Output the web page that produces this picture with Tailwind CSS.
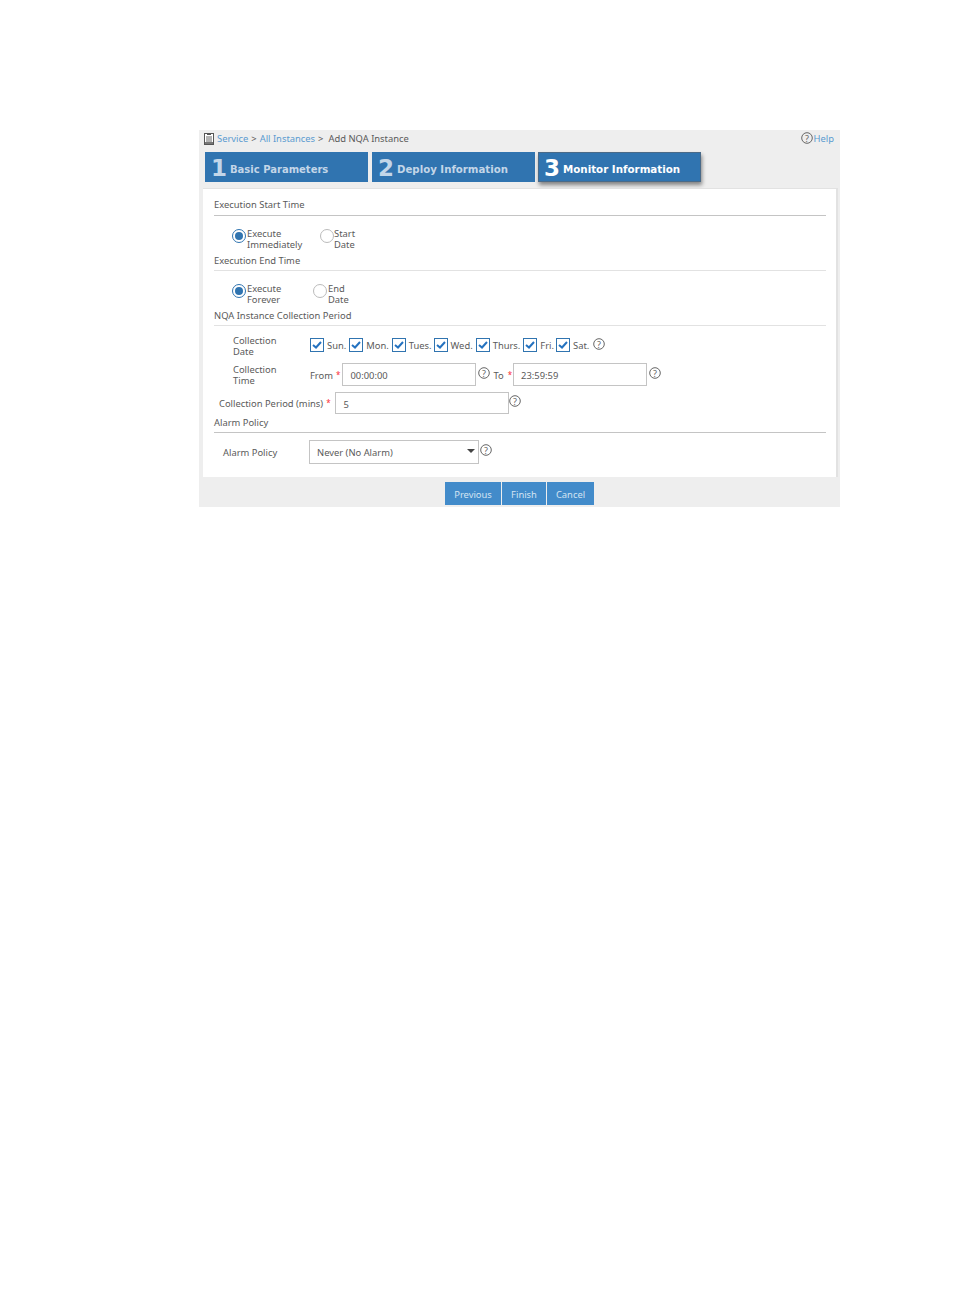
<!DOCTYPE html>
<html lang="en">
<head>
    <meta charset="UTF-8">
    <title>Add NQA Instance</title>
    <script src="https://cdn.jsdelivr.net/npm/@tailwindcss/browser@4"></script>
</head>
<body class="bg-white font-['Noto_Sans','Liberation_Sans',sans-serif] text-[9.4px] text-[#5a5a5a] leading-[11px]">
<div class="pt-[130px] pl-[199px]">
    <div class="w-[641px] h-[377px] bg-[#eeeeee] flex flex-col">
        <!-- breadcrumb -->
        <div class="h-[22px] flex items-start pt-[3px] pl-[5px] pr-[6px]">
            <svg width="10" height="12" viewBox="0 0 10 12" class="mr-[3px]"><rect x="0.5" y="0.5" width="9" height="11" fill="#fff" stroke="#555"/><rect x="3" y="0" width="4" height="2" fill="#555"/><path d="M2 4h6M2 6h6M2 8h6" stroke="#666"/><rect x="1" y="9" width="8" height="2" fill="#777"/></svg>
            <span class="text-[#5a9bd0]">Service</span>
            <span class="mx-[3px]">&gt;</span>
            <span class="text-[#5a9bd0]">All Instances</span>
            <span class="ml-[3px] mr-[5px]">&gt;</span>
            <span>Add NQA Instance</span>
            <span class="ml-auto flex items-center mt-[-1px]">
                <svg width="12" height="12" viewBox="0 0 12 12"><circle cx="6" cy="6" r="5.3" fill="none" stroke="#666"/><text x="6" y="9.5" text-anchor="middle" font-size="9" fill="#666">?</text></svg>
                <span class="text-[#5a9bd0] ml-[1px]">Help</span>
            </span>
        </div>
        <!-- wizard steps -->
        <div class="h-[36px] flex pl-[6px] font-['DejaVu_Sans',sans-serif] font-bold">
            <div class="w-[163px] h-[30px] pt-[3px] bg-[#3074b0] flex items-center text-[#c3d6e8]">
                <span class="w-[25px] pl-[6px] text-[23px]">1</span><span class="text-[10px] mt-[1px]">Basic Parameters</span>
            </div>
            <div class="w-[163px] h-[30px] pt-[3px] ml-[4px] bg-[#3074b0] flex items-center text-[#c3d6e8]">
                <span class="w-[25px] pl-[6px] text-[23px]">2</span><span class="text-[10.2px] mt-[1px]">Deploy Information</span>
            </div>
            <div class="w-[163px] h-[30px] pt-[3px] ml-[3px] bg-[#3074b0] border border-[#4a6a88] flex items-center text-white shadow-[1px_3px_4px_rgba(0,0,0,0.45)]">
                <span class="w-[24px] pl-[5px] text-[23px]">3</span><span class="text-[10.3px] mt-[1px]">Monitor Information</span>
            </div>
        </div>
        <!-- form panel -->
        <div class="w-[635px] h-[289px] ml-[4px] bg-white border-t border-r-2 border-[#e2e2e2] pl-[11px] pr-[9px]">
            <div class="h-[27px] w-[612px] border-b border-[#c4c4c4] pt-[10px]">Execution Start Time</div>
            <div class="h-[39px] flex pt-[12px]">
                <div class="w-[18px]"></div>
                <span class="w-[14px] h-[14px] rounded-full border border-[#3074b0] flex items-center justify-center mt-[1px]"><span class="w-[8px] h-[8px] rounded-full bg-[#3074b0]"></span></span>
                <span class="w-[74px] pl-[1px]">Execute<br>Immediately</span>
                <span class="w-[14px] h-[14px] rounded-full border border-[#bbb] mt-[1px]"></span>
                <span>Start<br>Date</span>
            </div>
            <div class="h-[16px] w-[612px] border-b border-[#e2e2e2]">Execution End Time</div>
            <div class="h-[39px] flex pt-[12px]">
                <div class="w-[18px]"></div>
                <span class="w-[14px] h-[14px] rounded-full border border-[#3074b0] flex items-center justify-center mt-[1px]"><span class="w-[8px] h-[8px] rounded-full bg-[#3074b0]"></span></span>
                <span class="w-[67px] pl-[1px]">Execute<br>Forever</span>
                <span class="w-[14px] h-[14px] rounded-full border border-[#bbb] mt-[1px]"></span>
                <span class="ml-[1px]">End<br>Date</span>
            </div>
            <div class="h-[16px] w-[612px] border-b border-[#e2e2e2]">NQA Instance Collection Period</div>
            <!-- collection date -->
            <div class="h-[37px] flex pt-[9px]">
                <div class="w-[19px]"></div>
                <span class="w-[77px]">Collection<br>Date</span>
                <div class="flex items-start pt-[3px]">
                    <span class="w-[14px] h-[14px] border border-[#3074b0] flex items-center justify-center"><svg width="10" height="8" viewBox="0 0 10 8"><path d="M1 4l3 2.5L9 1" fill="none" stroke="#2472c0" stroke-width="2"/></svg></span><span class="ml-[3px] mr-[3px] mt-[2px]">Sun.</span>
                    <span class="w-[14px] h-[14px] border border-[#3074b0] flex items-center justify-center"><svg width="10" height="8" viewBox="0 0 10 8"><path d="M1 4l3 2.5L9 1" fill="none" stroke="#2472c0" stroke-width="2"/></svg></span><span class="ml-[3px] mr-[3px] mt-[2px]">Mon.</span>
                    <span class="w-[14px] h-[14px] border border-[#3074b0] flex items-center justify-center"><svg width="10" height="8" viewBox="0 0 10 8"><path d="M1 4l3 2.5L9 1" fill="none" stroke="#2472c0" stroke-width="2"/></svg></span><span class="ml-[3px] mr-[2px] mt-[2px]">Tues.</span>
                    <span class="w-[14px] h-[14px] border border-[#3074b0] flex items-center justify-center"><svg width="10" height="8" viewBox="0 0 10 8"><path d="M1 4l3 2.5L9 1" fill="none" stroke="#2472c0" stroke-width="2"/></svg></span><span class="ml-[3px] mr-[3px] mt-[2px]">Wed.</span>
                    <span class="w-[14px] h-[14px] border border-[#3074b0] flex items-center justify-center"><svg width="10" height="8" viewBox="0 0 10 8"><path d="M1 4l3 2.5L9 1" fill="none" stroke="#2472c0" stroke-width="2"/></svg></span><span class="ml-[3px] mr-[3px] mt-[2px]">Thurs.</span>
                    <span class="w-[14px] h-[14px] border border-[#3074b0] flex items-center justify-center"><svg width="10" height="8" viewBox="0 0 10 8"><path d="M1 4l3 2.5L9 1" fill="none" stroke="#2472c0" stroke-width="2"/></svg></span><span class="ml-[3px] mr-[2px] mt-[2px]">Fri.</span>
                    <span class="w-[14px] h-[14px] border border-[#3074b0] flex items-center justify-center"><svg width="10" height="8" viewBox="0 0 10 8"><path d="M1 4l3 2.5L9 1" fill="none" stroke="#2472c0" stroke-width="2"/></svg></span><span class="ml-[3px] mr-[4px] mt-[2px]">Sat.</span>
                    <svg width="12" height="12" viewBox="0 0 12 12"><circle cx="6" cy="6" r="5.3" fill="none" stroke="#666"/><text x="6" y="9.5" text-anchor="middle" font-size="9" fill="#666">?</text></svg>
                </div>
            </div>
            <!-- collection time -->
            <div class="h-[29px] flex">
                <div class="w-[19px]"></div>
                <span class="w-[77px] pt-[1px]">Collection<br>Time</span>
                <div class="flex items-start">
                    <span class="mt-[7px]">From</span><span class="text-red-500 text-[8px] ml-[3px] mt-[6px]">*</span>
                    <span class="w-[134px] h-[23px] ml-[2px] border border-[#c4c4c4] pl-[7px] pt-[6px]">00:00:00</span>
                    <svg width="12" height="12" viewBox="0 0 12 12" class="ml-[2px] mt-[4px]"><circle cx="6" cy="6" r="5.3" fill="none" stroke="#666"/><text x="6" y="9.5" text-anchor="middle" font-size="9" fill="#666">?</text></svg>
                    <span class="ml-[3px] mt-[7px]">To</span><span class="text-red-500 text-[8px] ml-[4px] mt-[6px]">*</span>
                    <span class="w-[134px] h-[23px] ml-[1px] border border-[#c4c4c4] pl-[7px] pt-[6px]">23:59:59</span>
                    <svg width="12" height="12" viewBox="0 0 12 12" class="ml-[2px] mt-[4px]"><circle cx="6" cy="6" r="5.3" fill="none" stroke="#666"/><text x="6" y="9.5" text-anchor="middle" font-size="9" fill="#666">?</text></svg>
                </div>
            </div>
            <!-- collection period -->
            <div class="h-[25px] flex pl-[5px]">
                <span class="mt-[6px]">Collection Period (mins)</span><span class="text-red-500 text-[8px] ml-[3px] mt-[5px]">*</span>
                <span class="w-[174px] h-[22px] ml-[4px] border border-[#c4c4c4] pl-[8px] pt-[6px]">5</span>
                <svg width="12" height="12" viewBox="0 0 12 12" class="mt-[3px]"><circle cx="6" cy="6" r="5.3" fill="none" stroke="#666"/><text x="6" y="9.5" text-anchor="middle" font-size="9" fill="#666">?</text></svg>
            </div>
            <div class="h-[16px] w-[612px] border-b border-[#c4c4c4]">Alarm Policy</div>
            <div class="flex pt-[7px] pl-[9px]">
                <span class="w-[86px] mt-[7px]">Alarm Policy</span>
                <span class="w-[170px] h-[24px] border border-[#c4c4c4] pl-[7px] flex items-center justify-between pr-[3px] pt-[1px]">Never (No Alarm)
                    <svg width="8" height="4" viewBox="0 0 8 4" class="mt-[-3px]"><path d="M0 0h8L4 4z" fill="#444"/></svg>
                </span>
                <svg width="12" height="12" viewBox="0 0 12 12" class="ml-[1px] mt-[4px]"><circle cx="6" cy="6" r="5.3" fill="none" stroke="#666"/><text x="6" y="9.5" text-anchor="middle" font-size="9" fill="#666">?</text></svg>
            </div>
        </div>
        <!-- buttons -->
        <div class="flex pt-[5px] pl-[246px] text-[#d4e4f2]">
            <span class="w-[56px] h-[23px] pt-[2px] bg-[#428bca] flex items-center justify-center">Previous</span>
            <span class="w-[44px] h-[23px] pt-[2px] ml-[1px] bg-[#428bca] flex items-center justify-center">Finish</span>
            <span class="w-[47px] h-[23px] pt-[2px] ml-[1px] bg-[#428bca] flex items-center justify-center">Cancel</span>
        </div>
    </div>
</div>
</body>
</html>
